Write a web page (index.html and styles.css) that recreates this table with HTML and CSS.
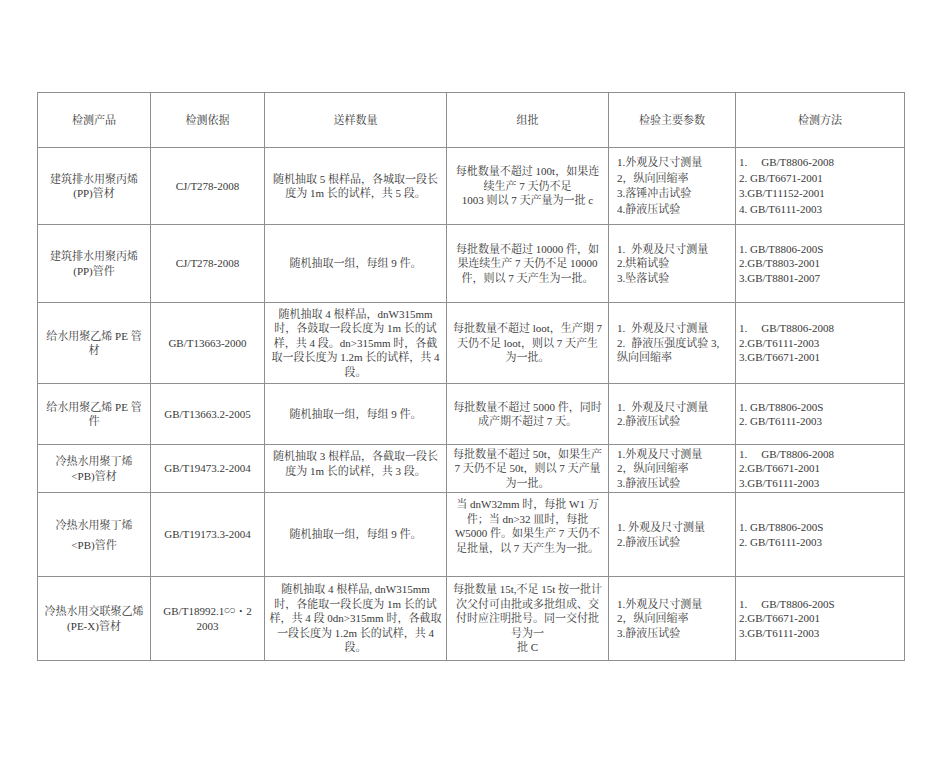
FILE: index.html
```html
<!DOCTYPE html>
<html lang="zh-CN">
<head>
<meta charset="utf-8">
<title>检测项目</title>
<link rel="stylesheet" href="styles.css">
</head>
<body>
<div class="page">
<table class="spec">
  <colgroup>
    <col class="c1"><col class="c2"><col class="c3"><col class="c4"><col class="c5"><col class="c6">
  </colgroup>
  <tr class="r0">
    <td>检测产品</td><td>检测依据</td><td>送样数量</td><td>组批</td><td>检验主要参数</td><td>检测方法</td>
  </tr>
  <tr class="r1">
    <td>建筑排水用聚丙烯<br>(PP)管材</td>
    <td>CJ/T278-2008</td>
    <td>随机抽取 5 根样品，各城取一段长<br>度为 1m 长的试样，共 5 段。</td>
    <td>每枇数量不超过 100t，如果连<br>续生产 7 天仍不足<br>1003 则以 7 天产量为一批 c</td>
    <td class="left p5 tall">1.外观及尺寸测量<br>2，纵向回缩率<br>3.落锤冲击试验<br>4.静液压试验</td>
    <td class="left p6 tall">1.<span class="gap"></span>GB/T8806-2008<br>2. GB/T6671-2001<br>3.GB/T11152-2001<br>4. GB/T6111-2003</td>
  </tr>
  <tr class="r2">
    <td>建筑排水用聚丙烯<br>(PP)管件</td>
    <td>CJ/T278-2008</td>
    <td>随机抽取一组，每组 9 件。</td>
    <td>每批数量不超过 10000 件，如<br>果连续生产 7 天仍不足 10000<br>件，则以 7 天产生为一批。</td>
    <td class="left p5">1.<span class="sgap"></span>外观及尺寸测量<br>2.烘箱试验<br>3.坠落试验</td>
    <td class="left p6">1. GB/T8806-200S<br>2.GB/T8803-2001<br>3.GB/T8801-2007</td>
  </tr>
  <tr class="r3">
    <td>给水用聚乙烯 PE 管<br>材</td>
    <td>GB/T13663-2000</td>
    <td>随机抽取 4 根样品，dnW315mm<br>时，各鼓取一段长度为 1m 长的试<br>样，共 4 段。dn&gt;315mm 时，各截<br>取一段长度为 1.2m 长的试样，共 4<br>段。</td>
    <td>每批数量不超过 loot，生产期 7<br>天仍不足 loot，则以 7 天产生<br>为一批。</td>
    <td class="left p5">1.<span class="sgap"></span>外观及尺寸测量<br>2.<span class="sgap"></span>静液压强度试验 3,<br>纵向回缩率</td>
    <td class="left p6">1.<span class="gap"></span>GB/T8806-2008<br>2.GB/T6111-2003<br>3.GB/T6671-2001</td>
  </tr>
  <tr class="r4">
    <td>给水用聚乙烯 PE 管<br>件</td>
    <td>GB/T13663.2-2005</td>
    <td>随机抽取一组，每组 9 件。</td>
    <td>每批数量不超过 5000 件，同时<br>成产期不超过 7 天。</td>
    <td class="left p5">1.<span class="sgap"></span>外观及尺寸测量<br>2.静液压试验</td>
    <td class="left p6">1. GB/T8806-200S<br>2. GB/T6111-2003</td>
  </tr>
  <tr class="r5">
    <td>冷热水用聚丁烯<br>&lt;PB)管材</td>
    <td>GB/T19473.2-2004</td>
    <td class="top">随机抽取 3 根样品，各截取一段长<br>度为 1m 长的试样，共 3 段。</td>
    <td>每批数量不超过 50t，如果生产<br>7 天仍不足 50t，则以 7 天产量<br>为一批。</td>
    <td class="left p5">1.外观及尺寸测量<br>2，纵向回缩率<br>3.静液压试验</td>
    <td class="left p6">1.<span class="gap"></span>GB/T8806-2008<br>2.GB/T6671-2001<br>3.GB/T6111-2003</td>
  </tr>
  <tr class="r6">
    <td class="loose">冷热水用聚丁烯<br>&lt;PB)管件</td>
    <td>GB/T19173.3-2004</td>
    <td>随机抽取一组，每组 9 件。</td>
    <td class="top">当 dnW32mm 时，每批 W1 万<br>件；当 dn&gt;32 皿时，每批<br>W5000 件。如果生产 7 天仍不<br>足批量，以 7 天产生为一批。</td>
    <td class="left p5">1. 外观及尺寸测量<br>2.静液压试验</td>
    <td class="left p6">1. GB/T8806-200S<br>2. GB/T6111-2003</td>
  </tr>
  <tr class="r7">
    <td>冷热水用交联聚乙烯<br>(PE-X)管材</td>
    <td>GB/T18992.1∽・2<br>2003</td>
    <td>随机抽取 4 根样品, dnW315mm<br>时，各能取一段长度为 1m 长的试<br>样，共 4 段 0dn&gt;315mm 时，各截取<br>一段长度为 1.2m 长的试样，共 4<br>段。</td>
    <td>每批数量 15t,不足 15t 按一批计<br>次父付可由批或多批组成、交<br>付时应注明批号。同一交付批<br>号为一<br>批 C</td>
    <td class="left p5">1.外观及尺寸测量<br>2，纵向回缩率<br>3.静液压试验</td>
    <td class="left p6">1.<span class="gap"></span>GB/T8806-200S<br>2.GB/T6671-2001<br>3.GB/T6111-2003</td>
  </tr>
</table>
</div>
</body>
</html>
```
FILE: styles.css
```css
html, body {
  margin: 0;
  padding: 0;
  background: #ffffff;
}
.page {
  padding: 92px 0 0 37px;
}
.spec {
  border-collapse: collapse;
  table-layout: fixed;
  width: 867px;
  font-family: "Liberation Serif", "Noto Serif CJK SC", "Noto Sans CJK SC", serif;
  font-size: 11px;
  line-height: 14.5px;
  color: #383838;
}
.c1 { width: 113px; }
.c2 { width: 114px; }
.c3 { width: 182px; }
.c4 { width: 162px; }
.c5 { width: 127px; }
.c6 { width: 169px; }
.spec td {
  border: 1px solid #8f8f8f;
  text-align: center;
  vertical-align: middle;
  padding: 0 2px;
  white-space: nowrap;
  overflow: visible;
}
.spec td.left { text-align: left; }
.spec td.p5 { padding-left: 8px; }
.spec td.p6 { padding-left: 3px; }
.spec td.tall { line-height: 15.5px; }
.spec td.loose { line-height: 20px; }
.spec td.top { vertical-align: top; padding-top: 4px; }
.gap { display: inline-block; width: 14px; }
.sgap { display: inline-block; width: 6px; }
.r0 { height: 55px; }
.r1 { height: 77px; }
.r2 { height: 78px; }
.r3 { height: 81px; }
.r4 { height: 61px; }
.r5 { height: 48px; }
.r6 { height: 84px; }
.r7 { height: 84px; }
```
